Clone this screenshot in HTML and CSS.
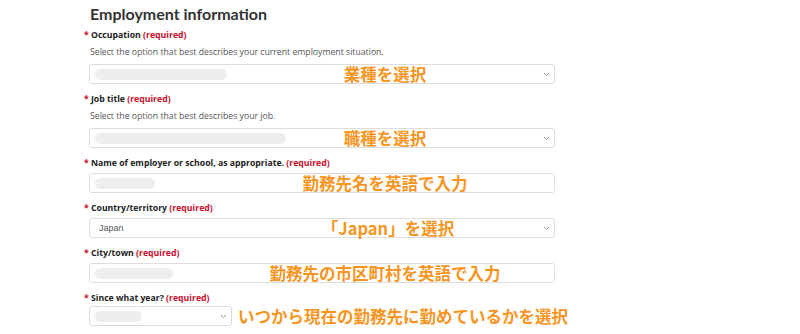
FILE: index.html
```html
<!DOCTYPE html>
<html lang="en">
<head>
    <meta charset="UTF-8">
    <title>Employment information</title>
    <link rel="stylesheet" href="styles.css">
</head>
<body>
    <section class="employment">
        <h2>Employment information</h2>

        <div class="field">
            <label><span class="star">*</span> Occupation <span class="req">(required)</span></label>
            <p class="hint">Select the option that best describes your current employment situation.</p>
            <div class="control select">
                <span class="blur" style="width: 132px"></span>
                <svg class="chev" width="7" height="5" viewBox="0 0 7 5"><polyline points="1,1 3.5,3.5 6,1" fill="none" stroke="#999" stroke-width="1"/></svg>
                <span class="note">業種を選択</span>
            </div>
        </div>

        <div class="field">
            <label><span class="star">*</span> Job title <span class="req">(required)</span></label>
            <p class="hint">Select the option that best describes your job.</p>
            <div class="control select">
                <span class="blur" style="width: 191px"></span>
                <svg class="chev" width="7" height="5" viewBox="0 0 7 5"><polyline points="1,1 3.5,3.5 6,1" fill="none" stroke="#999" stroke-width="1"/></svg>
                <span class="note">職種を選択</span>
            </div>
        </div>

        <div class="field">
            <label><span class="star">*</span> Name of employer or school, as appropriate. <span class="req">(required)</span></label>
            <div class="control">
                <span class="blur" style="width: 60px"></span>
                <span class="note">勤務先名を英語で入力</span>
            </div>
        </div>

        <div class="field">
            <label><span class="star">*</span> Country/territory <span class="req">(required)</span></label>
            <div class="control select">
                <span class="value">Japan</span>
                <svg class="chev" width="7" height="5" viewBox="0 0 7 5"><polyline points="1,1 3.5,3.5 6,1" fill="none" stroke="#999" stroke-width="1"/></svg>
                <span class="note note-japan">「Japan」を選択</span>
            </div>
        </div>

        <div class="field">
            <label><span class="star">*</span> City/town <span class="req">(required)</span></label>
            <div class="control">
                <span class="blur" style="width: 78px"></span>
                <span class="note">勤務先の市区町村を英語で入力</span>
            </div>
        </div>

        <div class="field last">
            <label><span class="star">*</span> Since what year? <span class="req">(required)</span></label>
            <div class="row">
                <div class="control select small">
                    <span class="blur" style="width: 47px"></span>
                    <svg class="chev" width="7" height="5" viewBox="0 0 7 5"><polyline points="1,1 3.5,3.5 6,1" fill="none" stroke="#999" stroke-width="1"/></svg>
                </div>
                <span class="note-inline">いつから現在の勤務先に勤めているかを選択</span>
            </div>
        </div>
    </section>
</body>
</html>
```

FILE: styles.css
```css
body {
    margin: 0;
    background-color: #fff;
    font-family: "Open Sans", Arial, sans-serif;
    color: #333;
}
.employment {
    padding: 3px 0 0 89px;
}
h2 {
    font-family: Lato, "Open Sans", sans-serif;
    font-weight: 700;
    font-size: 16px;
    line-height: 22px;
    color: #333;
    margin: 0 0 3px 1px;
}
.field {
    margin-bottom: 8px;
}
label {
    display: block;
    margin: 0 0 3px -5px;
    font-size: 8.7px;
    line-height: 14px;
    font-weight: 700;
    color: #222;
}
.star, .req {
    color: #c8102e;
}
.hint {
    margin: 0 0 5px 1px;
    font-size: 8.7px;
    line-height: 14px;
    color: #555;
}
.control {
    position: relative;
    box-sizing: border-box;
    width: 466px;
    height: 20px;
    border: 1px solid #ddd;
    border-radius: 3px;
    background-color: #fff;
    display: flex;
    align-items: center;
    padding: 0 4px 0 5px;
}
.control.small {
    width: 143px;
}
.blur {
    display: block;
    height: 11px;
    border-radius: 6px;
    background-color: #eeeeee;
}
.value {
    font-family: "Liberation Sans", Arial, sans-serif;
    font-size: 9px;
    color: #555;
    padding-left: 4px;
}
.chev {
    margin-left: auto;
}
.note, .note-inline {
    font-family: "Noto Sans CJK JP", sans-serif;
    font-weight: 700;
    font-size: 16.5px;
    line-height: 18px;
    color: #f7951f;
    white-space: nowrap;
}
.note {
    position: absolute;
    left: 295px;
    top: 50%;
    transform: translate(-50%, -50%);
}
.note-japan {
    left: 298px;
}
.row {
    display: flex;
    align-items: center;
    gap: 6px;
}
.last label {
    margin-bottom: 1px;
}
```
